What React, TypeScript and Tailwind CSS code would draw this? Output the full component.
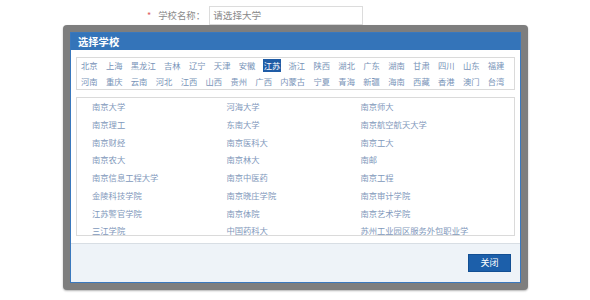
import React from "react";

const row1 = ["北京","上海","黑龙江","吉林","辽宁","天津","安徽","江苏","浙江","陕西","湖北","广东","湖南","甘肃","四川","山东","福建"];
const row2 = ["河南","重庆","云南","河北","江西","山西","贵州","广西","内蒙古","宁夏","青海","新疆","海南","西藏","香港","澳门","台湾"];
const schools = [
  ["南京大学","河海大学","南京师大"],
  ["南京理工","东南大学","南京航空航天大学"],
  ["南京财经","南京医科大","南京工大"],
  ["南京农大","南京林大","南邮"],
  ["南京信息工程大学","南京中医药","南京工程"],
  ["金陵科技学院","南京晓庄学院","南京审计学院"],
  ["江苏警官学院","南京体院","南京艺术学院"],
  ["三江学院","中国药科大","苏州工业园区服务外包职业学"],
];

const font = { fontFamily: '"Noto Sans CJK SC", "Noto Sans", sans-serif' };

function Prov({ name }: { name: string }) {
  const sel = name === "江苏";
  return (
    <span
      className={
        "mr-[6.3px] h-[13px] px-[1px] text-[8.3px] leading-[13px] whitespace-nowrap " +
        (sel ? "bg-[#1f5ca6] text-white" : "text-[#7893b8]")
      }
    >
      {name}
    </span>
  );
}

export default function App() {
  return (
    <div className="relative h-[300px] w-[590px] overflow-hidden bg-white" style={font}>
      <div className="flex items-center pl-[147px] pt-[6px]">
        <span className="mr-[7px] text-[9px] leading-[19px] text-[#e06060]">*</span>
        <span className="w-[51px] text-[9.4px] leading-[19px] text-[#8a8a8a]">学校名称：</span>
        <div className="flex h-[19px] w-[154px] items-center border border-[#dcdcdc] pl-[3px] text-[9.6px] text-[#8a8a8a]">
          请选择大学
        </div>
      </div>

      <div className="absolute left-[63px] top-[25px] h-[265px] w-[465px] rounded-[4px] bg-[#7e7e7e] p-[7px] shadow-[0_1px_2px_rgba(0,0,0,0.3)]">
        <div className="flex h-[251px] w-[451px] flex-col border border-[#3a78bd] bg-white">
          <div className="flex h-[17px] items-center bg-[#3474b9] pl-[7px] text-[10.3px] font-bold text-white">
            选择学校
          </div>
          <div className="px-[5px] pt-[7px]">
            <div className="flex h-[33px] flex-col gap-y-[3px] border border-[#dadada] pl-[3px] pt-[1px]">
              <div className="flex">
                {row1.map((p) => (
                  <Prov key={p} name={p} />
                ))}
              </div>
              <div className="flex">
                {row2.map((p) => (
                  <Prov key={p} name={p} />
                ))}
              </div>
            </div>
            <div className="mt-[7px] h-[139px] overflow-hidden border border-[#dadada] pl-[15px]">
              {schools.map((r, i) => (
                <div key={i} className="grid h-[17.75px] grid-cols-[134.4px_134px_140px] items-center">
                  {r.map((s) => (
                    <span key={s} className="text-[8.3px] leading-[17.75px] whitespace-nowrap text-[#8198bb]">
                      {s}
                    </span>
                  ))}
                </div>
              ))}
            </div>
          </div>
          <div className="mt-[7px] flex flex-1 items-start justify-end border-t border-[#d8dee4] bg-[#eef3f8] pr-[9px] pt-[10px]">
            <button className="flex h-[18px] w-[43px] items-center justify-center border border-[#134f93] bg-[#1c5faa] text-[9px] text-white">
              关闭
            </button>
          </div>
        </div>
      </div>
    </div>
  );
}
